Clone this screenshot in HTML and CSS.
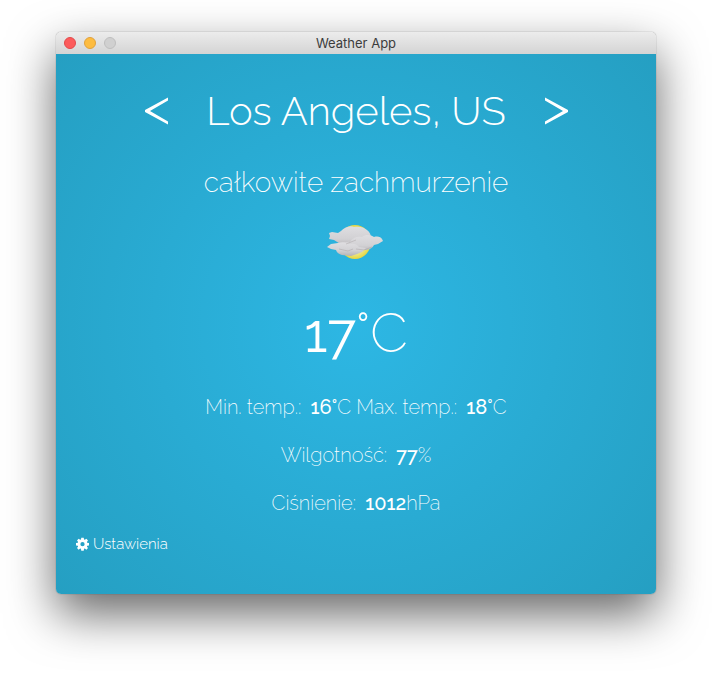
FILE: index.html
```html
<!DOCTYPE html>
<html lang="pl">
<head>
<meta charset="utf-8">
<meta name="viewport" content="width=device-width, initial-scale=1">
<title>Weather App</title>
<link rel="stylesheet" href="styles.css">
</head>
<body>
<div class="window">
  <header class="titlebar">
    <div class="controls">
      <button class="dot dot-close" type="button" aria-label="Zamknij"></button>
      <button class="dot dot-minimize" type="button" aria-label="Minimalizuj"></button>
      <button class="dot dot-zoom" type="button" aria-label="Powiększ" disabled></button>
    </div>
    <span class="titlebar-text">Weather App</span>
  </header>
  <main class="weather">
    <div class="city">
      <button class="arrow" type="button" aria-label="Poprzednie miasto">
        <svg width="24" height="28" viewBox="0 0 24 28"><path d="M24 .5V3.500L6 14 24 24.500V27.500L1 15V13z"/></svg>
      </button>
      <h1 class="city-name">Los Angeles, US</h1>
      <button class="arrow" type="button" aria-label="Następne miasto">
        <svg width="24" height="28" viewBox="0 0 24 28"><path d="M1 .5V3.500L19 14 1 24.500V27.500L24 15V13z"/></svg>
      </button>
    </div>
    <p class="description">całkowite zachmurzenie</p>
    <svg class="condition" width="60" height="40" viewBox="0 0 60 40" aria-hidden="true">
      <defs>
        <linearGradient id="cloud" x1="0" y1="0" x2="0" y2="1">
          <stop offset="0" stop-color="#dfdee1"/>
          <stop offset="0.6" stop-color="#d2d1d4"/>
          <stop offset="1" stop-color="#b5b2b5"/>
        </linearGradient>
        <radialGradient id="sun">
          <stop offset="0.6" stop-color="#f0ec9c"/>
          <stop offset="1" stop-color="#e6d640"/>
        </radialGradient>
        <filter id="soft" x="-10%" y="-10%" width="120%" height="120%"><feGaussianBlur stdDeviation="0.7"/></filter>
      </defs>
      <g filter="url(#soft)">
        <ellipse cx="29" cy="19" rx="16" ry="17" fill="url(#sun)"/>
        <path fill="url(#cloud)" d="M3 10 6 9l6 1 3-2c3-3 8-6 13-4 5-1 10 0 13 3 3 2 4 5 4 8l-2 7-12 2-15-2-8-5-5-1 1-3z"/>
        <path fill="url(#cloud)" d="M16 26c0-4 3-8 8-7 2-4 7-6 12-5 4-3 9-2 12 0 4-1 7 0 8 2l1 2-5 3-4 1c-3 5-7 5-11 5-3 2-7 3-10 1-5 1-9 1-11-2z"/>
        <path fill="url(#cloud)" d="M1 24l4-3 7-1c3-1 8-1 11 1 5-1 8 0 10 3l7 1-4 4-5 2-6 2-9-1c-3-1-5-2-6-5l-5-1z"/>
        <path fill="none" stroke="#a9a3a5" stroke-opacity=".5" d="M20 21l5-2 5-2M30 26l8 1 8-3M13 26l9 2 5-2"/>
      </g>
    </svg>
    <p class="temperature"><span class="degrees">17<span class="degree-sign">°</span></span>C</p>
    <div class="details">
      <p>Min. temp.: <b>16°</b>C Max. temp.: <b>18°</b>C</p>
      <p>Wilgotność: <b>77</b>%</p>
      <p>Ciśnienie: <b>1012</b>hPa</p>
    </div>
    <a class="settings" href="#">
      <svg width="13" height="14" viewBox="0 0 14 14" aria-hidden="true"><path fill-rule="evenodd" d="M5.700.2h2.600l.4 2 .8.300L11.200 1.400 12.900 3.100 11.700 4.800l.3.800 2 .4v2.500l-2 .4-.3.800 1.200 1.700-1.700 1.700-1.700-1.200-.8.300-.4 2H5.700l-.4-2-.8-.3-1.700 1.200-1.700-1.700 1.200-1.700-.3-.8-2-.4V6l2-.4.3-.8L1.100 3.100 2.800 1.400l1.700 1.100.8-.3zM7 4.900a2.300 2.300 0 1 0 0 4.600A2.300 2.300 0 0 0 7 4.900z"/></svg>
      <span>Ustawienia</span>
    </a>
  </main>
</div>
</body>
</html>
```
FILE: styles.css
```css
* {
  box-sizing: border-box;
}

body {
  margin: 0;
  padding: 32px 56px 80px;
  background: #fff;
  font-family: Raleway, Lato, "Open Sans", sans-serif;
}

.window {
  overflow: hidden;
  border-radius: 5px;
  box-shadow: 0 0 1px rgba(0, 0, 0, 0.6), 0 20px 48px rgba(0, 0, 0, 0.6);
}

.titlebar {
  display: grid;
  grid-template-columns: 1fr auto 1fr;
  align-items: center;
  height: 22px;
  padding: 0 8px;
  background: linear-gradient(#ececec, #d4d4d4);
}

.controls {
  display: flex;
  gap: 8px;
}

.dot {
  width: 12px;
  height: 12px;
  padding: 0;
  border: 1px solid;
  border-radius: 50%;
}

.dot-close {
  border-color: #e2494a;
  background: #fc5b5b;
}

.dot-minimize {
  border-color: #e0a13c;
  background: #fdbc40;
}

.dot-zoom {
  border-color: #bebebe;
  background: #d0d0d0;
}

.titlebar-text {
  color: #3c3c3c;
  font: 13px/22px Inter, "Liberation Sans", sans-serif;
}

.weather {
  display: flex;
  flex-direction: column;
  align-items: center;
  padding: 33px 20px 40px;
  background: radial-gradient(circle, #2db7e4, #259fc2);
  color: #fff;
  font-weight: 300;
}

.city {
  display: flex;
  align-items: center;
  gap: 38px;
}

.arrow {
  display: flex;
  padding: 0;
  border: 0;
  background: none;
}

.arrow path {
  fill: #fff;
}

.city-name {
  margin: 0;
  font-size: 40px;
  font-weight: 300;
  line-height: 48px;
}

.description {
  margin: 32px 0 24px;
  font-size: 28px;
  font-weight: 200;
  line-height: 32px;
}

.temperature {
  margin: 38px 0 30px;
  font-size: 54px;
  font-weight: 200;
  line-height: 64px;
}

.degrees {
  font-weight: 400;
}

.degree-sign {
  font-weight: 300;
}

.details {
  display: grid;
  gap: 24px;
  margin-bottom: 19px;
  font-size: 20px;
  font-weight: 200;
  text-align: center;
}

.details p {
  margin: 0;
  line-height: 24px;
}

.details b {
  margin-left: 4px;
  font-weight: 500;
}

.settings {
  display: flex;
  align-items: center;
  align-self: flex-start;
  gap: 4px;
  color: #fff;
  font-size: 15px;
  line-height: 20px;
  text-decoration: none;
}

.settings path {
  fill: #fff;
}
```
